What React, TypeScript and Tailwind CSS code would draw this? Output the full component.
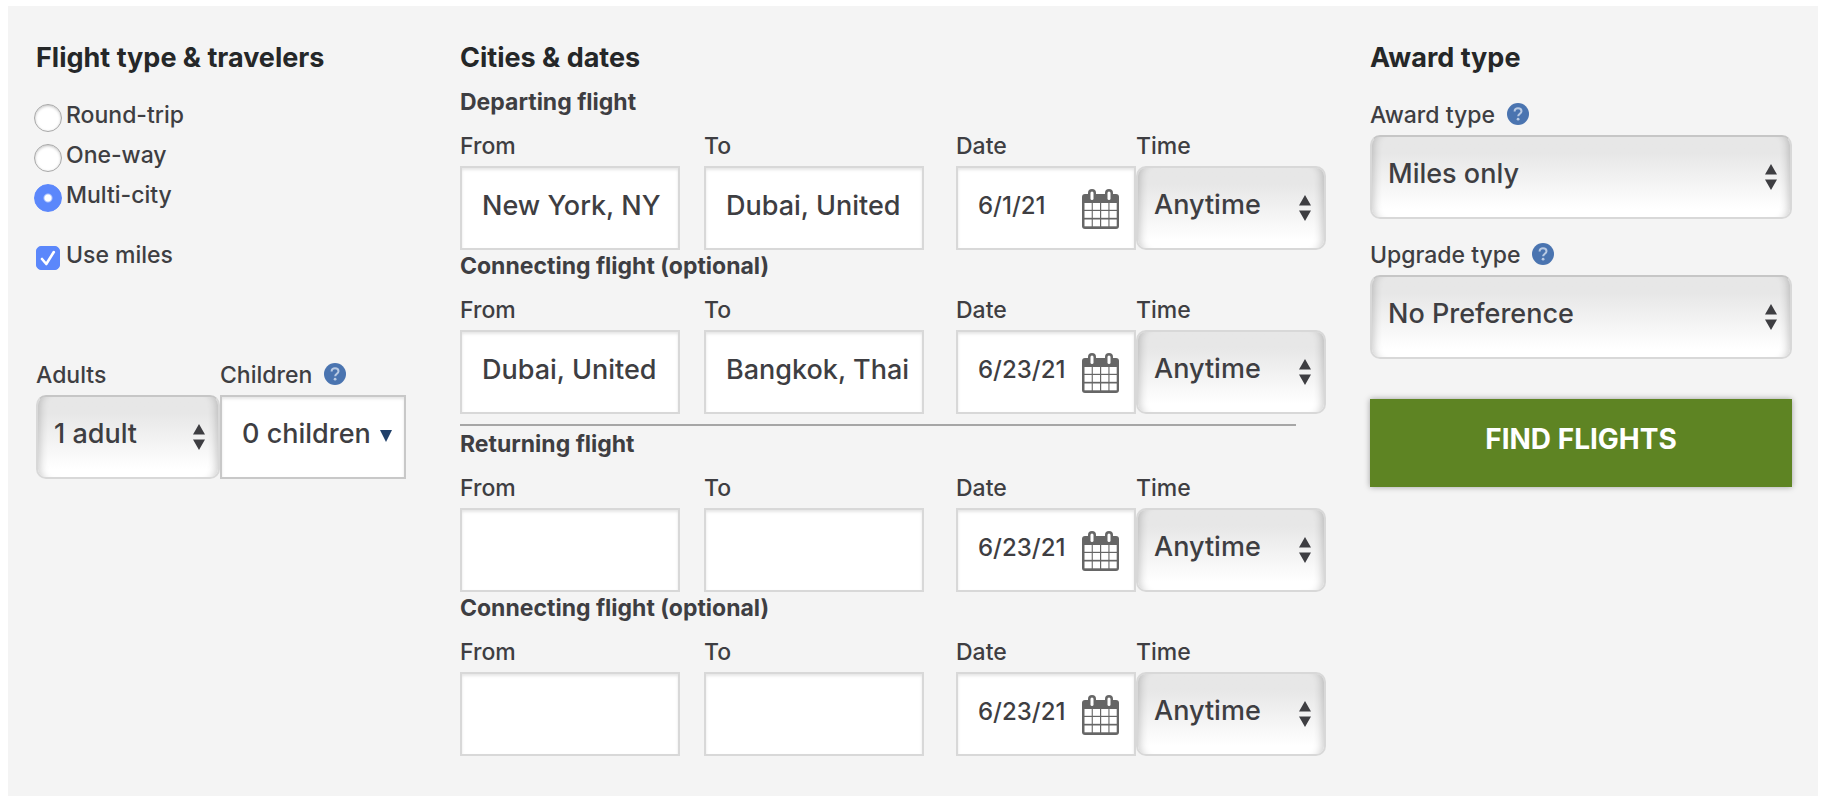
import React, { useState } from 'react';

const fieldBorder = 'border-2 border-[#d8d8d8]';

const HelpButton: React.FC<{ topic: string }> = ({ topic }) => (
  <button type="button" aria-label={`Help with ${topic}`} className="mb-0.5 ml-3 rounded-full">
    <svg width="22" height="22" viewBox="0 0 22 22" className="block">
      <circle cx="11" cy="11" r="11" fill="#4a74b0" />
      <path
        d="M7.6 8.4C7.6 6.4 9 5.2 11 5.2s3.5 1.200 3.500 3c0 2.400-3.300 2.600-3.300 5"
        fill="none"
        stroke="#b9cae3"
        strokeWidth="2"
      />
      <circle cx="11.100" cy="16.200" r="1.400" fill="#b9cae3" />
    </svg>
  </button>
);

const CalendarIcon = () => (
  <svg width="37" height="40" viewBox="0 0 37 40" className="block">
    <rect x="0" y="5" width="37" height="35" rx="3" fill="#666666" />
    <rect x="6" y="0" width="8" height="13" rx="4" fill="#666666" />
    <rect x="23" y="0" width="8" height="13" rx="4" fill="#666666" />
    <rect x="8.500" y="2.500" width="3" height="8.500" rx="1.500" fill="#ffffff" />
    <rect x="25.500" y="2.500" width="3" height="8.500" rx="1.500" fill="#ffffff" />
    {[14, 22, 30.5].map((y) =>
      [2.5, 10.8, 19.2, 27.5].map((x) => (
        <rect key={`${x}-${y}`} x={x} y={y} width="7.200" height="6.800" fill="#ffffff" />
      ))
    )}
  </svg>
);

const SelectBox: React.FC<{ id: string; options: string[]; dark?: boolean }> = ({
  id,
  options,
  dark,
}) => (
  <div className="relative">
    <select
      id={id}
      className={`block h-21 w-full appearance-none rounded-[10px] ${fieldBorder} ${
        dark ? 'border-t-[#c6c6c6]' : ''
      } bg-linear-to-b from-[#e7e7e7] from-20% to-white to-90% pr-9 pb-1.5 pl-4 text-[27px] shadow-[inset_10px_0_8px_-8px_rgba(0,0,0,0.2),inset_-10px_0_8px_-8px_rgba(0,0,0,0.2)]`}
    >
      {options.map((option) => (
        <option key={option}>{option}</option>
      ))}
    </select>
    <svg
      width="12"
      height="26"
      viewBox="0 0 12 26"
      className="pointer-events-none absolute top-[29px] right-[15px]"
    >
      <path d="M6 0l6 10.500H0zM6 26l6-10.500H0z" fill="#3e3e42" />
    </svg>
  </div>
);

const Label: React.FC<{ htmlFor: string; help?: boolean; children: string }> = ({
  htmlFor,
  help,
  children,
}) => (
  <div className="mb-1 flex h-8 items-center">
    <label htmlFor={htmlFor} className="leading-8 whitespace-nowrap">
      {children}
    </label>
    {help && <HelpButton topic={children} />}
  </div>
);

const CityField: React.FC<{ id: string; label: string; value: string; className?: string }> = ({
  id,
  label,
  value,
  className,
}) => (
  <div className={className}>
    <Label htmlFor={id}>{label}</Label>
    <input
      id={id}
      type="text"
      defaultValue={value}
      className={`block h-21 w-full ${fieldBorder} bg-white pb-1.5 pl-5 text-[27px] shadow-[inset_0_2px_3px_rgba(0,0,0,0.1)]`}
    />
  </div>
);

type Leg = { id: string; title: string; from: string; to: string; date: string };

const FlightLeg: React.FC<{ leg: Leg }> = ({ leg }) => (
  <section>
    <h3 className="mb-3 leading-8 font-bold">{leg.title}</h3>
    <div className="grid grid-cols-[244fr_252fr_180fr_190fr]">
      <CityField id={`${leg.id}-from`} label="From" value={leg.from} className="pr-6" />
      <CityField id={`${leg.id}-to`} label="To" value={leg.to} className="pr-8" />
      <div>
        <Label htmlFor={`${leg.id}-date`}>Date</Label>
        <div
          className={`flex h-21 items-center ${fieldBorder} bg-white pr-[15px] pl-5 shadow-[inset_0_2px_3px_rgba(0,0,0,0.1)]`}
        >
          <input
            id={`${leg.id}-date`}
            type="text"
            defaultValue={leg.date}
            className="h-full w-full min-w-0 pb-1.5 text-[24px]"
          />
          <button type="button" aria-label="Open calendar" className="mt-0.5 shrink-0">
            <CalendarIcon />
          </button>
        </div>
      </div>
      <div>
        <Label htmlFor={`${leg.id}-time`}>Time</Label>
        <SelectBox id={`${leg.id}-time`} options={['Anytime', 'Morning', 'Afternoon', 'Evening']} />
      </div>
    </div>
  </section>
);

const outbound: Leg[] = [
  { id: 'depart', title: 'Departing flight', from: 'New York, NY', to: 'Dubai, United', date: '6/1/21' },
  {
    id: 'depart-connect',
    title: 'Connecting flight (optional)',
    from: 'Dubai, United',
    to: 'Bangkok, Thai',
    date: '6/23/21',
  },
];

const inbound: Leg[] = [
  { id: 'return', title: 'Returning flight', from: '', to: '', date: '6/23/21' },
  { id: 'return-connect', title: 'Connecting flight (optional)', from: '', to: '', date: '6/23/21' },
];

const tripTypes = ['Round-trip', 'One-way', 'Multi-city'];

const App: React.FC = () => {
  const [tripType, setTripType] = useState('Multi-city');
  const [useMiles, setUseMiles] = useState(true);

  return (
    <div className="bg-white px-2 pt-1.5 pb-2 font-['Inter',sans-serif] text-[23px] font-[450] text-[#3e3e42]">
      <form
        onSubmit={(e) => e.preventDefault()}
        className="mr-0.5 grid grid-cols-[380fr_866fr_422fr] gap-x-11 bg-[#f4f4f4] pt-8 pr-6.5 pb-10 pl-7"
      >
        <div>
          <h2 className="text-[27px] leading-10 font-bold text-[#252728]">Flight type &amp; travelers</h2>
          <div className="mt-5">
            {tripTypes.map((type) => (
              <label key={type} className="flex h-10 items-center">
                <input
                  type="radio"
                  name="trip"
                  checked={tripType === type}
                  onChange={() => setTripType(type)}
                  className="mr-1 -ml-0.5 size-7 appearance-none rounded-full border border-[#a8a8a8] bg-white shadow-[inset_0_1px_3px_rgba(0,0,0,0.25)] checked:border-[#5b87fb] checked:bg-[radial-gradient(circle,#ffffff_3px,#5b87fb_5px)] checked:shadow-none"
                />
                <span className="pb-1.5 leading-8">{type}</span>
              </label>
            ))}
          </div>
          <label className="mt-5 flex h-10 items-center">
            <span className="relative mr-1.5">
              <input
                type="checkbox"
                checked={useMiles}
                onChange={(e) => setUseMiles(e.target.checked)}
                className="peer block size-6 appearance-none rounded-[5px] border border-[#a8a8a8] bg-white checked:border-[#5b87fb] checked:bg-[#5b87fb]"
              />
              <svg
                viewBox="0 0 24 24"
                className="pointer-events-none absolute inset-0 hidden size-6 peer-checked:block"
              >
                <path
                  d="M6 13l4.300 5L17.800 6"
                  fill="none"
                  stroke="#ffffff"
                  strokeWidth="2.600"
                  strokeLinecap="round"
                  strokeLinejoin="round"
                />
              </svg>
            </span>
            <span className="pb-1.5 leading-8">Use miles</span>
          </label>
          <div className="mt-[81px] mr-2.5 grid grid-cols-[184fr_186fr]">
            <div>
              <Label htmlFor="adults">Adults</Label>
              <SelectBox id="adults" options={['1 adult', '2 adults', '3 adults']} dark />
            </div>
            <div>
              <Label htmlFor="children" help>
                Children
              </Label>
              <button
                id="children"
                type="button"
                className="flex h-21 w-full items-center justify-between border-2 border-[#c8c8c8] bg-white pr-3 pb-1.5 pl-5 text-[27px] whitespace-nowrap shadow-[inset_0_2px_3px_rgba(0,0,0,0.1)]"
              >
                0 children
                <svg width="12" height="12" viewBox="0 0 12 12" className="mt-1 shrink-0">
                  <path d="M0 0h12L6 12z" fill="#20406a" />
                </svg>
              </button>
            </div>
          </div>
        </div>

        <div>
          <h2 className="mb-2 text-[27px] leading-10 font-bold text-[#252728]">Cities &amp; dates</h2>
          {outbound.map((leg) => (
            <FlightLeg key={leg.id} leg={leg} />
          ))}
          <hr className="mt-2.5 mr-[30px] mb-0.5 border-t-2 border-[#a6a6a6]" />
          {inbound.map((leg) => (
            <FlightLeg key={leg.id} leg={leg} />
          ))}
        </div>

        <div>
          <h2 className="text-[27px] leading-10 font-bold text-[#252728]">Award type</h2>
          <div className="mt-[21px]">
            <Label htmlFor="award" help>
              Award type
            </Label>
            <SelectBox id="award" options={['Miles only', 'Miles + cash']} dark />
          </div>
          <div className="mt-5">
            <Label htmlFor="upgrade" help>
              Upgrade type
            </Label>
            <SelectBox id="upgrade" options={['No Preference', 'Miles upgrade']} dark />
          </div>
          <button
            type="submit"
            className="mt-10 h-22 w-full bg-[#5e8423] pb-2 text-[28px] font-bold text-white shadow-[0_0_6px_rgba(0,0,0,0.35)]"
          >
            FIND FLIGHTS
          </button>
        </div>
      </form>
    </div>
  );
};

export default App;
